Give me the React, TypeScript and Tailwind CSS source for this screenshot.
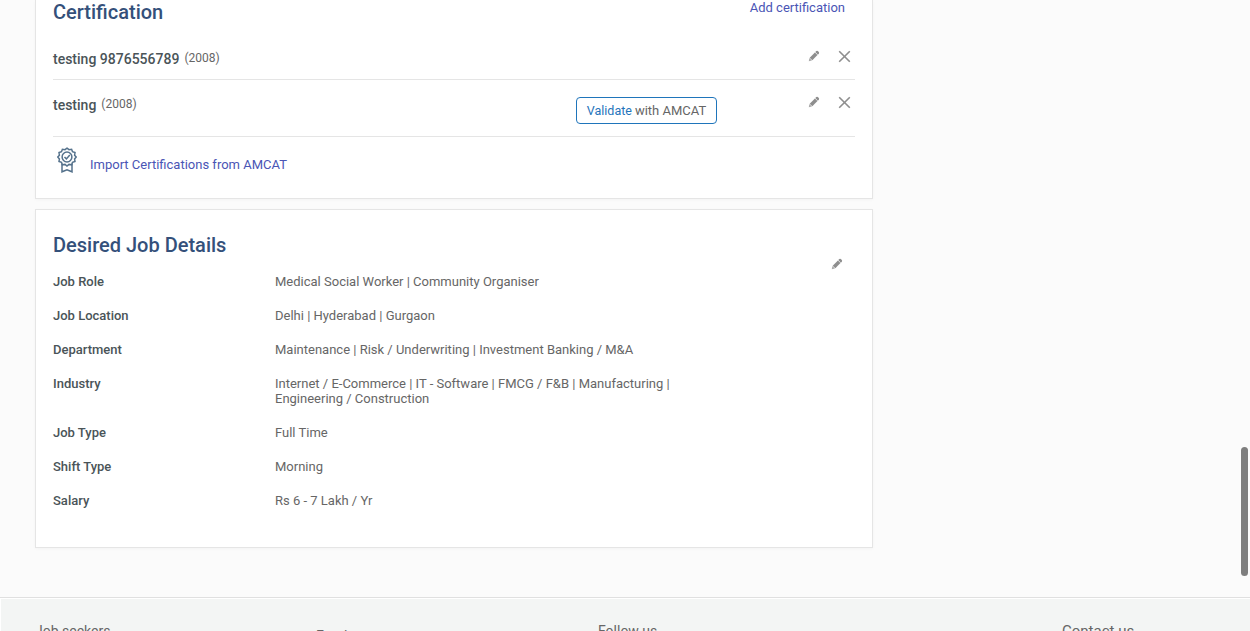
import React from "react";

const Pencil = ({ size = 12 }: { size?: number }) => (
  <svg width={size} height={size} viewBox="0 0 12 12" className="block shrink-0 text-[#8e8e8e]">
    <path d="M.8 11.200l.6-3.200 2.600 2.600z" fill="#aaa" />
    <path d="M1.700 7.700l5.200-5.200L9.500 5.100l-5.200 5.200z" fill="currentColor" />
    <path d="M7.300 2.100l1-1q1-.8 2.100.4t.6 2.100l-1.100 1.100z" fill="currentColor" />
  </svg>
);

const Cross = () => (
  <svg width="13" height="13" viewBox="0 0 13 13" className="block shrink-0">
    <path d="M1.200 1.200l10.600 10.600M11.800 1.200L1.200 11.800" stroke="#8e8e8e" strokeWidth="1.600" fill="none" />
  </svg>
);

const Medal = () => (
  <svg width="20" height="26" viewBox="0 0 20 26" className="block shrink-0" fill="none" stroke="#55728c" strokeWidth="1.500">
    <path d="M10 1.200L12 2.700 14.600 2.300 15.500 4.700 18 5.600 17.600 8.200 19.200 10 17.600 12 18 14.500 15.500 15.400 14.600 17.800 12 17.400 10 19 8 17.400 5.400 17.800 4.500 15.400 2 14.500 2.400 12 .8 10 2.400 8.200 2 5.600 4.500 4.700 5.400 2.300 8 2.700z" />
    <circle cx="10" cy="10" r="4.900" />
    <path d="M7.500 10l1.900 1.900 3.400-3.800" />
    <path d="M5 17v7.800L10 22.700l5 2.100V17" />
  </svg>
);

const details: [string, string][] = [
  ["Job Role", "Medical Social Worker | Community Organiser"],
  ["Job Location", "Delhi | Hyderabad | Gurgaon"],
  ["Department", "Maintenance | Risk / Underwriting | Investment Banking / M&A"],
  ["Industry", "Internet / E-Commerce | IT - Software | FMCG / F&B | Manufacturing | Engineering / Construction"],
  ["Job Type", "Full Time"],
  ["Shift Type", "Morning"],
  ["Salary", "Rs 6 - 7 Lakh / Yr"],
];

const RowActions = () => (
  <div className="flex items-start gap-[18px] pr-[4px]">
    <Pencil />
    <Cross />
  </div>
);

export default function App() {
  return (
    <div className="relative flex h-[631px] w-[1250px] flex-col overflow-hidden bg-[#fbfbfb] font-['Roboto',sans-serif] text-[13px] leading-[15px] text-[#666]">
      <main className="ml-[35px] flex h-[597px] w-[838px] shrink-0 flex-col gap-[10px]">
        <section className="h-[199px] shrink-0 border border-t-0 border-[#e5e5e5] bg-white px-[17px] shadow-[0_1px_3px_rgba(0,0,0,0.03)]">
          <div className="flex h-[34px] justify-between pr-[10px]">
            <h2 className="text-[20px] font-medium leading-[24px] text-[#34507a]">Certification</h2>
            <a className="text-[#4a55b5]">Add certification</a>
          </div>
          <div className="flex h-[46px] items-start justify-between border-b border-[#e5e5e5] pt-[16px]">
            <div className="flex gap-[5px]">
              <span className="pt-px text-[14px] font-medium leading-[16px] text-[#4a5458]">testing 9876556789</span>
              <span className="pt-px text-[12px]">(2008)</span>
            </div>
            <RowActions />
          </div>
          <div className="flex h-[57px] items-start border-b border-[#e5e5e5] pt-[16px]">
            <div className="flex w-[523px] gap-[5px]">
              <span className="pt-px text-[14px] font-medium leading-[16px] text-[#4a5458]">testing</span>
              <span className="pt-px text-[12px]">(2008)</span>
            </div>
            <button className="mt-px flex h-[27px] w-[141px] items-center justify-center gap-[3px] rounded-[4px] border border-[#1f75bb] whitespace-nowrap">
              <span className="text-[12.500px] text-[#1f75bb]">Validate</span>
              <span>with AMCAT</span>
            </button>
            <div className="ml-auto">
              <RowActions />
            </div>
          </div>
          <div className="flex gap-[13px] pt-[10px] pl-[4px]">
            <Medal />
            <a className="pt-[10px] text-[#4a55b5]">Import Certifications from AMCAT</a>
          </div>
        </section>

        <section className="flex h-[339px] shrink-0 justify-between border border-[#e5e5e5] bg-white pt-[23px] pr-[29px] pl-[17px] shadow-[0_1px_3px_rgba(0,0,0,0.03)]">
          <div>
            <h2 className="mb-[17px] text-[20px] font-medium leading-[24px] text-[#34507a]">Desired Job Details</h2>
            <dl className="flex flex-col gap-[19px]">
              {details.map(([label, value]) => (
                <div key={label} className="flex">
                  <dt className="w-[222px] shrink-0 font-medium text-[#4a5458]">{label}</dt>
                  <dd className="w-[410px]">{value}</dd>
                </div>
              ))}
            </dl>
          </div>
          <div className="pt-[25px]">
            <Pencil />
          </div>
        </section>
      </main>

      <footer className="flex h-[34px] shrink-0 flex-col border-t border-[#e0e0e0] bg-white pt-px pl-px">
        <div className="flex h-[32px] shrink-0 items-start overflow-hidden bg-[#f3f5f4] text-[14px] leading-[16px]">
          <span className="w-[279px] pt-[24px] pl-[34px]">Job seekers</span>
          <span className="w-[281px] pt-[29px] pl-[36px]">Employers</span>
          <span className="w-[464px] pt-[24px] pl-[37px]">Follow us</span>
          <span className="pt-[24px] pl-[37px] text-[15px] leading-[17px]">Contact us</span>
        </div>
      </footer>

      <div className="absolute top-[447px] left-[1241px] h-[129px] w-[7px] rounded-full bg-[#7e7e7e]" />
    </div>
  );
}
